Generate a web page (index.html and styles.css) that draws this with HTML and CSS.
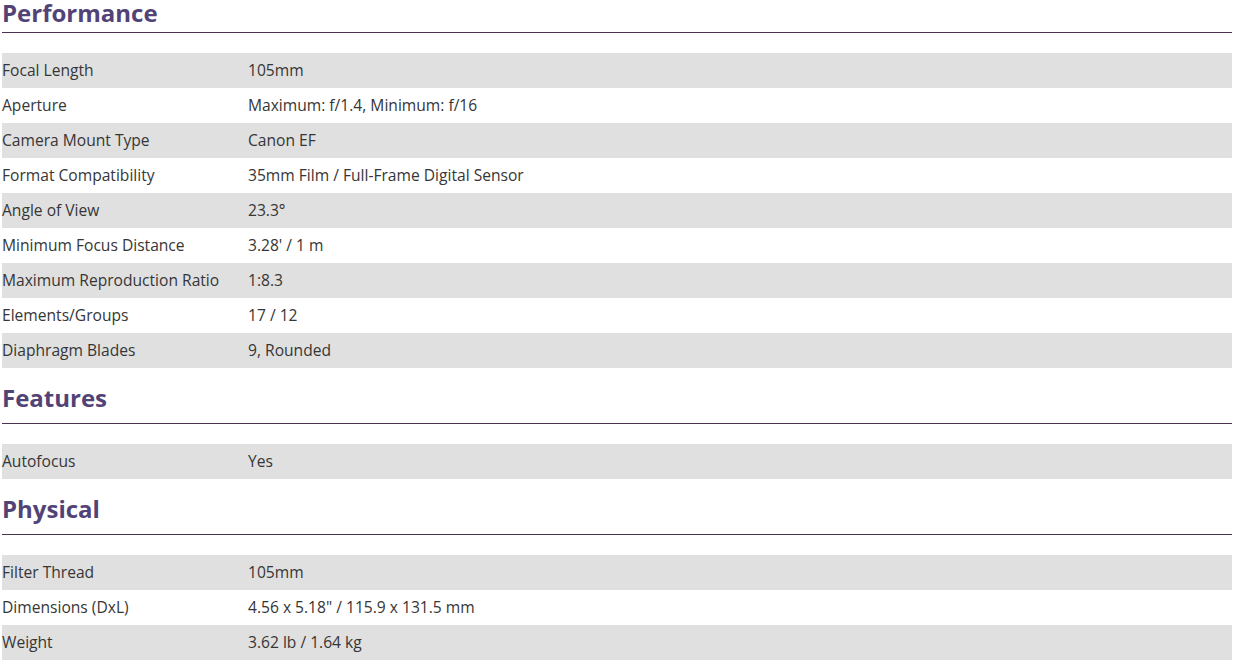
FILE: index.html
```html
<!DOCTYPE html>
<html>
<head>
<meta charset="utf-8">
<link rel="stylesheet" href="styles.css">
</head>
<body>
<div class="specs">
  <section class="group">
    <h2 class="group-title first">Performance</h2>
    <div class="rows">
      <div class="row"><span class="label">Focal Length</span><span class="value">105mm</span></div>
      <div class="row"><span class="label">Aperture</span><span class="value">Maximum: f/1.4, Minimum: f/16</span></div>
      <div class="row"><span class="label">Camera Mount Type</span><span class="value">Canon EF</span></div>
      <div class="row"><span class="label">Format Compatibility</span><span class="value">35mm Film / Full-Frame Digital Sensor</span></div>
      <div class="row"><span class="label">Angle of View</span><span class="value">23.3°</span></div>
      <div class="row"><span class="label">Minimum Focus Distance</span><span class="value">3.28' / 1 m</span></div>
      <div class="row"><span class="label">Maximum Reproduction Ratio</span><span class="value">1:8.3</span></div>
      <div class="row"><span class="label">Elements/Groups</span><span class="value">17 / 12</span></div>
      <div class="row"><span class="label">Diaphragm Blades</span><span class="value">9, Rounded</span></div>
    </div>
  </section>
  <section class="group">
    <h2 class="group-title">Features</h2>
    <div class="rows">
      <div class="row"><span class="label">Autofocus</span><span class="value">Yes</span></div>
    </div>
  </section>
  <section class="group">
    <h2 class="group-title">Physical</h2>
    <div class="rows">
      <div class="row"><span class="label">Filter Thread</span><span class="value">105mm</span></div>
      <div class="row"><span class="label">Dimensions (DxL)</span><span class="value">4.56 x 5.18" / 115.9 x 131.5 mm</span></div>
      <div class="row"><span class="label">Weight</span><span class="value">3.62 lb / 1.64 kg</span></div>
    </div>
  </section>
</div>
</body>
</html>
```
FILE: styles.css
```css
html, body {
  margin: 0;
  padding: 0;
  background: #ffffff;
}
body {
  font-family: "Open Sans", "Liberation Sans", sans-serif;
  color: #363636;
}
.specs {
  margin-left: 2px;
  width: 1230px;
}
.group-title {
  margin: 17px 0 20px;
  padding: 0 0 12px;
  font-size: 24px;
  line-height: 26px;
  font-weight: 700;
  color: #524377;
  border-bottom: 1px solid #4b3150;
}
.group-title.first {
  margin-top: 0;
  padding-bottom: 6px;
}
.rows {
  display: flex;
  flex-direction: column;
}
.row {
  display: flex;
  box-sizing: border-box;
  height: 35px;
  padding-bottom: 2px;
  align-items: center;
  font-size: 15.6px;
  line-height: 20px;
}
.row:nth-child(odd) {
  background: #e0e0e0;
}
.label {
  width: 246px;
  flex: none;
}
.value {
  flex: 1;
}
```
